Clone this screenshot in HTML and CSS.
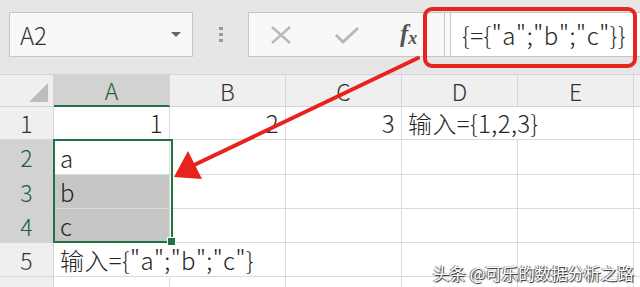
FILE: index.html
```html
<!DOCTYPE html>
<html lang="zh">

<head>
    <meta charset="UTF-8">
    <meta name="viewport" content="width=device-width, initial-scale=1.0">
    <title>数组常量</title>
    <link rel="stylesheet" href="styles.css">
</head>

<body>
    <div class="page">
        <div class="toolbar">
            <div class="name-box">
                <span>A2</span>
                <span class="caret"></span>
            </div>
            <div class="grip"><i></i><i></i><i></i></div>
            <div class="formula-bar">
                <div class="fx-tools">
                    <svg class="tool-icon" width="22" height="18" viewBox="0 0 22 18">
                        <path d="M2 1 L20 17 M20 1 L2 17" stroke="#b9b9b9" stroke-width="2.4" fill="none"/>
                    </svg>
                    <svg class="tool-icon" width="26" height="18" viewBox="0 0 26 18">
                        <path d="M2 9 L9 16 L24 2" stroke="#b9b9b9" stroke-width="3" fill="none"/>
                    </svg>
                    <span class="fx">f<sub>x</sub></span>
                </div>
                <div class="formula-input">{={"a";"b";"c"}}</div>
            </div>
        </div>

        <div class="sheet">
            <div class="grid">
                <div class="corner"><span class="corner-tri"></span></div>
                <div class="col-head active">A</div>
                <div class="col-head">B</div>
                <div class="col-head">C</div>
                <div class="col-head">D</div>
                <div class="col-head">E</div>
                <div class="col-head"></div>

                <div class="row-head">1</div>
                <div class="cell num">1</div>
                <div class="cell num">2</div>
                <div class="cell num">3</div>
                <div class="cell overflow">输入={1,2,3}</div>
                <div class="cell"></div>
                <div class="cell"></div>

                <div class="row-head active">2</div>
                <div class="cell">a</div>
                <div class="cell"></div>
                <div class="cell"></div>
                <div class="cell"></div>
                <div class="cell"></div>
                <div class="cell"></div>

                <div class="row-head active">3</div>
                <div class="cell picked">b</div>
                <div class="cell"></div>
                <div class="cell"></div>
                <div class="cell"></div>
                <div class="cell"></div>
                <div class="cell"></div>

                <div class="row-head active">4</div>
                <div class="cell picked">c</div>
                <div class="cell"></div>
                <div class="cell"></div>
                <div class="cell"></div>
                <div class="cell"></div>
                <div class="cell"></div>

                <div class="row-head">5</div>
                <div class="cell overflow">输入={"a";"b";"c"}</div>
                <div class="cell"></div>
                <div class="cell"></div>
                <div class="cell"></div>
                <div class="cell"></div>
                <div class="cell"></div>

                <div class="row-head">6</div>
                <div class="cell"></div>
                <div class="cell"></div>
                <div class="cell"></div>
                <div class="cell"></div>
                <div class="cell"></div>
                <div class="cell"></div>
            </div>
            <div class="selection"><span class="handle"></span></div>
        </div>

        <!-- annotations drawn over the screenshot -->
        <div class="callout"></div>
        <svg class="arrow" width="640" height="287" viewBox="0 0 640 287">
            <line x1="418" y1="58" x2="192" y2="166" stroke="#e8231d" stroke-width="4" stroke-linecap="round"/>
            <polygon points="174,177 188,151 202,179" fill="#e8231d"/>
        </svg>
        <div class="watermark">头条 @可乐的数据分析之路</div>
    </div>
</body>

</html>
```

FILE: styles.css
```css
body {
    margin: 0;
    font-family: "Noto Sans CJK SC", "Noto Sans", sans-serif;
    font-weight: 300;
    color: #262626;
    overflow: hidden;
}

.page {
    position: relative;
    width: 640px;
    height: 287px;
    overflow: hidden;
    background: #fff;
}

/* ---- top bar ---- */
.toolbar {
    height: 75px;
    box-sizing: border-box;
    background: #e6e6e6;
    border-bottom: 1px solid #d4d4d4;
    display: flex;
    align-items: flex-start;
    padding: 12px 0 0 9px;
}

.name-box {
    width: 184px;
    height: 45px;
    box-sizing: border-box;
    background: #f8f8f8;
    border: 1px solid #c6c6c6;
    display: flex;
    align-items: center;
    justify-content: space-between;
    padding: 0 11px 0 10px;
    font-size: 24px;
    color: #333;
}

.caret {
    width: 0;
    height: 0;
    border-left: 5px solid transparent;
    border-right: 5px solid transparent;
    border-top: 5px solid #666;
}

.grip {
    width: 55px;
    height: 45px;
    display: flex;
    flex-direction: column;
    align-items: center;
    justify-content: center;
    gap: 3px;
}

.grip i {
    width: 4px;
    height: 3px;
    background: #9a9a9a;
}

.formula-bar {
    flex: 1;
    height: 45px;
    box-sizing: border-box;
    background: #f8f8f8;
    border: 1px solid #c6c6c6;
    border-right: none;
    display: flex;
}

.fx-tools {
    width: 196px;
    box-sizing: border-box;
    border-right: 1px solid #c6c6c6;
    display: flex;
    align-items: center;
    padding-left: 21px;
}

.tool-icon {
    margin-right: 42px;
}

.tool-icon + .tool-icon {
    margin-right: 40px;
}

.fx {
    font-family: "Liberation Serif", serif;
    font-style: italic;
    font-weight: 700;
    font-size: 25px;
    color: #555;
}

.fx sub {
    font-size: 18px;
    vertical-align: -2px;
}

.formula-input {
    flex: 1;
    margin-left: 5px;
    border-left: 1px solid #c6c6c6;
    background: #fff;
    display: flex;
    align-items: center;
    padding-left: 11px;
    font-size: 24px;
    letter-spacing: 0.6px;
    white-space: nowrap;
}

/* ---- worksheet ---- */
.sheet {
    position: relative;
}

.grid {
    display: grid;
    grid-template-columns: 54px repeat(5, 116px) 40px;
    grid-template-rows: 32px 33px 35px 34px 34px 34px 34px;
}

.corner,
.col-head,
.row-head {
    background: #efefef;
    border-right: 1px solid #d4d4d4;
    border-bottom: 1px solid #d4d4d4;
    box-sizing: border-box;
    display: flex;
    align-items: center;
    justify-content: center;
    font-size: 23px;
    color: #333;
}

.corner {
    position: relative;
}

.corner-tri {
    position: absolute;
    right: 5px;
    bottom: 4px;
    width: 0;
    height: 0;
    border-left: 19px solid transparent;
    border-bottom: 19px solid #bdbdbd;
}

.col-head.active {
    background: #d2d2d2;
    color: #1e5e38;
    border-bottom: 2px solid #217346;
}

.row-head.active {
    background: #d2d2d2;
    color: #1e5e38;
}

.cell {
    border-right: 1px solid #dadada;
    border-bottom: 1px solid #dadada;
    box-sizing: border-box;
    display: flex;
    align-items: flex-end;
    padding: 0 6px 0 6px;
    font-size: 24px;
    line-height: 32px;
    letter-spacing: 0.4px;
    white-space: nowrap;
}

.cell.num {
    justify-content: flex-end;
}

.cell.overflow {
    overflow: visible;
    position: relative;
    z-index: 1;
    border-right-color: transparent;
}

.cell.picked {
    background: #c6c6c6;
}

.selection {
    position: absolute;
    left: 53px;
    top: 64px;
    width: 120px;
    height: 104px;
    box-sizing: border-box;
    border: 2px solid #217346;
    pointer-events: none;
}

.handle {
    position: absolute;
    right: -5px;
    bottom: -5px;
    width: 7px;
    height: 7px;
    background: #217346;
    border: 1px solid #fff;
}

/* ---- annotations ---- */
.callout {
    position: absolute;
    left: 423px;
    top: 7px;
    width: 214px;
    height: 61px;
    box-sizing: border-box;
    border: 4px solid #e5251f;
    border-radius: 9px;
}

.arrow {
    position: absolute;
    left: 0;
    top: 0;
}

.watermark {
    position: absolute;
    left: 433px;
    top: 261px;
    font-size: 16.5px;
    font-weight: 400;
    color: #fff;
    text-shadow: 1px 1px 1px #222, -1px 0 1px #555;
    white-space: nowrap;
}
```
